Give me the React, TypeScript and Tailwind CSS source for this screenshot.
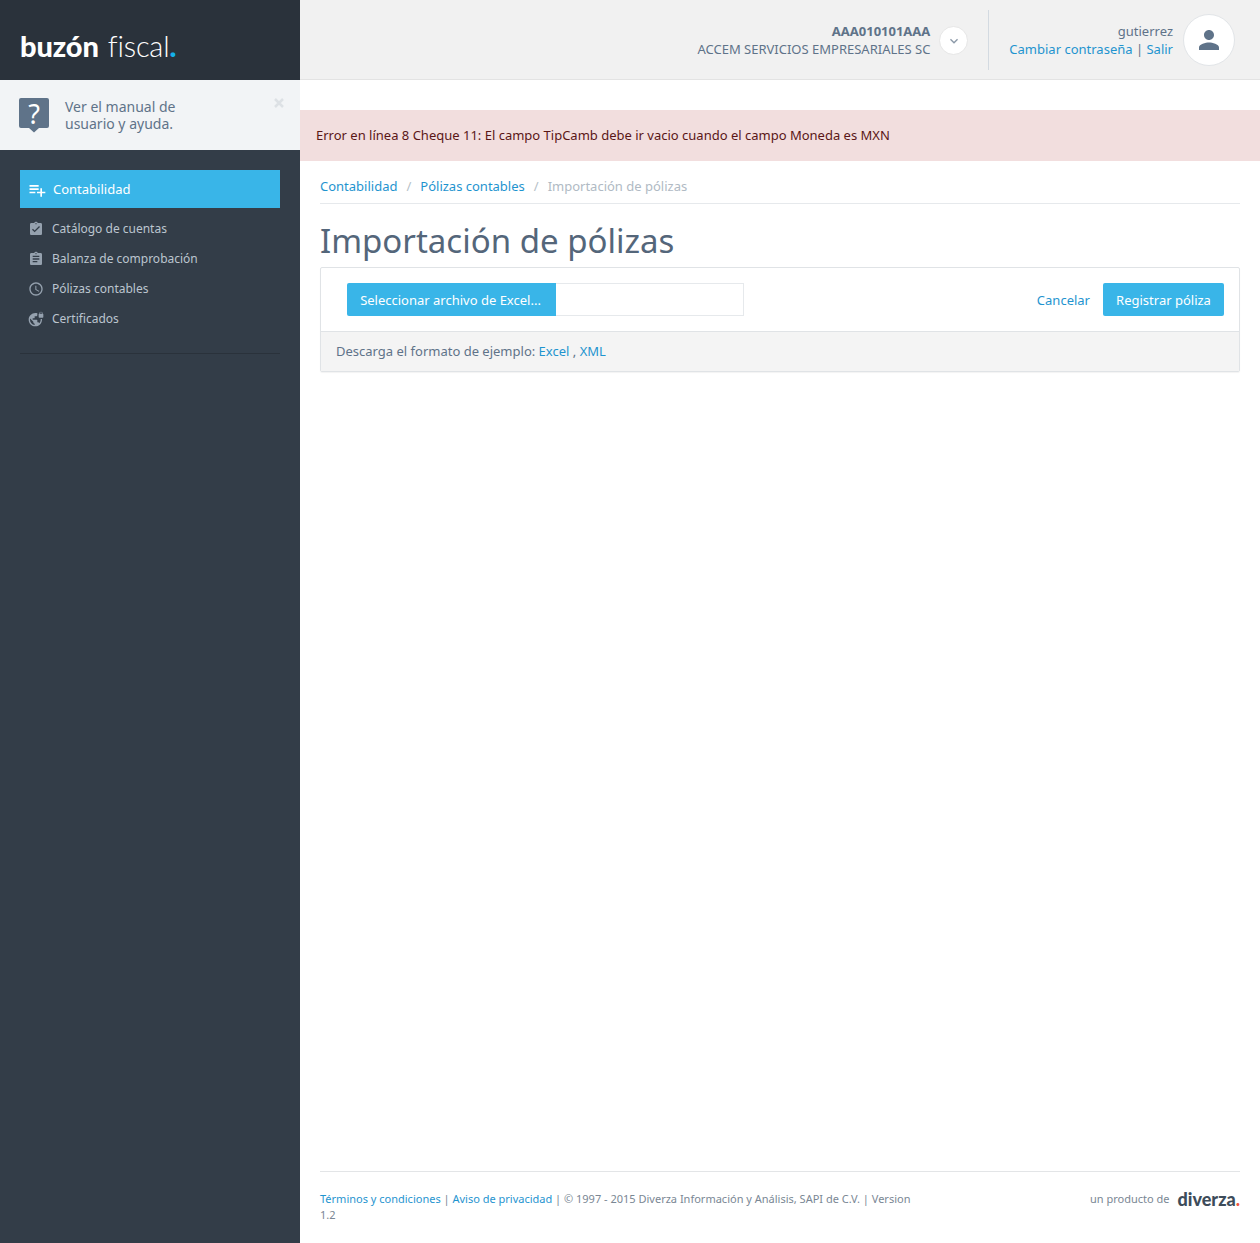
import { MdPlaylistAdd, MdAssignmentTurnedIn, MdAssignment, MdAccessTime, MdVpnLock, MdPerson, MdKeyboardArrowDown } from 'react-icons/md'

const menu = [
  { label: 'Catálogo de cuentas', icon: MdAssignmentTurnedIn },
  { label: 'Balanza de comprobación', icon: MdAssignment },
  { label: 'Pólizas contables', icon: MdAccessTime },
  { label: 'Certificados', icon: MdVpnLock },
]

export default function App() {
  return (
    <div className="flex min-h-screen bg-white font-['Noto_Sans','Open_Sans',sans-serif] text-[13px] text-[#54667a]">
      {/* Sidebar */}
      <aside className="w-[300px] shrink-0 bg-[#333d48]">
        <div className="flex h-20 items-center bg-[#2a323b] pl-5 pt-[10px] font-['Lato',sans-serif] text-[29px] leading-none text-white">
          <span className="font-black tracking-[-0.1px]">buzón</span>
          <span className="ml-[9px] font-light tracking-[-0.2px]">fiscal</span>
          <span className="font-black text-[#14b1ea]">.</span>
        </div>

        <div className="relative flex h-[70px] items-start bg-[#f2f4f6] pl-[19px] pt-[18px]">
          <div className="relative h-[36px] w-[30px] shrink-0">
            <svg width="30" height="36" viewBox="0 0 30 36">
              <path d="M2 0h26a2 2 0 0 1 2 2v26a2 2 0 0 1-2 2h-8l-5 4.500-5-4.500H2a2 2 0 0 1-2-2V2a2 2 0 0 1 2-2z" fill="#5f7389" />
            </svg>
            <span className="absolute inset-x-0 top-0 text-center text-[27px] leading-[32px] text-white">?</span>
          </div>
          <p className="ml-4 text-sm leading-[17px] text-[#5f7389]">
            Ver el manual de
            <br />
            usuario y ayuda.
          </p>
          <svg width="10" height="10" viewBox="0 0 10 10" className="absolute right-4 top-[18px]">
            <path d="M1 1l8 8M9 1l-8 8" stroke="#dde1e5" strokeWidth="2.500" />
          </svg>
        </div>

        <nav className="px-5 pt-5">
          <div className="flex h-[38px] items-center bg-[#39b5e8] pl-[7px] pt-px text-[13px] text-white">
            <MdPlaylistAdd size={20} />
            <span className="ml-[6px]">Contabilidad</span>
          </div>
          <ul className="border-b border-[#2a323b] pb-[19px] pt-[6px]">
            {menu.map((item) => (
              <li key={item.label} className="flex h-[30px] items-center pl-2 text-xs text-[#bcc5cf]">
                <item.icon size={16} className="text-[#95a1ae]" />
                <span className="ml-2">{item.label}</span>
              </li>
            ))}
          </ul>
        </nav>
      </aside>

      {/* Main */}
      <main className="flex min-w-0 flex-1 flex-col">
        <header className="flex h-20 items-center justify-end border-b border-[#e3e3e3] bg-[#f1f1f1] pr-[25px]">
          <div className="text-right text-[13px] leading-[18px] text-[#5f7389]">
            <div className="font-bold">AAA010101AAA</div>
            <div>ACCEM SERVICIOS EMPRESARIALES SC</div>
          </div>
          <div className="ml-[9px] mt-[2px] flex size-[29px] items-center justify-center rounded-full border border-[#e6e6e6] bg-white text-[#8b99a8]">
            <MdKeyboardArrowDown size={16} />
          </div>
          <div className="ml-[20px] flex h-[60px] flex-col items-end justify-center border-l border-[#d3dae1] pl-5 text-right text-[13px] leading-[18px]">
            <div className="text-[#5f7389]">gutierrez</div>
            <div className="text-[#5f7389]">
              <a className="text-[#1f94cf]">Cambiar contraseña</a> | <a className="text-[#1f94cf]">Salir</a>
            </div>
          </div>
          <div className="ml-[10px] flex size-[52px] items-center justify-center rounded-full border border-[#e2e5e8] bg-white text-[#5f7389]">
            <MdPerson size={30} />
          </div>
        </header>

        <div className="mt-[30px] flex h-[51px] items-center bg-[#f2dede] pl-4 text-[13px] text-[#5a1616]">
          Error en línea 8 Cheque 11: El campo TipCamb debe ir vacio cuando el campo Moneda es MXN
        </div>

        <div className="flex flex-1 flex-col px-5">
          <div className="flex h-[43px] items-center gap-[9px] border-b border-[#e6e9ec] pt-[10px] text-[13px]">
            <a className="text-[#1f94cf]">Contabilidad</a>
            <span className="text-[#b6bfc8]">/</span>
            <a className="text-[#1f94cf]">Pólizas contables</a>
            <span className="text-[#b6bfc8]">/</span>
            <span className="text-[#b0bac4]">Importación de pólizas</span>
          </div>

          <h1 className="mt-[14px] text-[33px] leading-[46px] text-[#54667a]">Importación de pólizas</h1>

          <section className="mt-[3px] rounded-[2px] border border-[#e0e3e6] shadow-[0_1px_1px_rgba(0,0,0,0.05)]">
            <div className="flex h-[63px] items-center pl-[26px] pr-[15px]">
              <button className="h-[33px] w-[209px] rounded-l-[2px] bg-[#39b5e8] pr-[2px] pt-[2px] text-[13px] text-white">
                Seleccionar archivo de Excel...
              </button>
              <div className="h-[33px] w-[188px] border border-l-0 border-[#e6e9ec] bg-white" />
              <a className="ml-auto pt-[2px] text-[13px] text-[#1f94cf]">Cancelar</a>
              <button className="ml-[13px] h-[33px] w-[121px] rounded-[2px] bg-[#39b5e8] pt-[2px] text-[13px] text-white">
                Registrar póliza
              </button>
            </div>
            <div className="flex h-[40px] items-center border-t border-[#e0e3e6] bg-[#f4f4f4] pl-[15px] text-[13px] text-[#5f7389]">
              <span>
                Descarga el formato de ejemplo: <a className="text-[#1f94cf]">Excel</a> , <a className="text-[#1f94cf]">XML</a>
              </span>
            </div>
          </section>

          <footer className="mt-auto flex h-[72px] justify-between border-t border-[#e3e5e7] pt-[19px] text-[11px] leading-4 text-[#7a8794]">
            <p className="w-[600px]">
              <a className="text-[#1f94cf]">Términos y condiciones</a> | <a className="text-[#1f94cf]">Aviso de privacidad</a> | © 1997 - 2015 Diverza Información y Análisis, SAPI de C.V. | Version 1.2
            </p>
            <div className="flex items-start">
              <span>un producto de</span>
              <span className="ml-2 font-['Lato',sans-serif] text-[18px] font-black leading-4 text-[#3d4c5a]">
                diverza<span className="text-[#f0573e]">.</span>
              </span>
            </div>
          </footer>
        </div>
      </main>
    </div>
  )
}
